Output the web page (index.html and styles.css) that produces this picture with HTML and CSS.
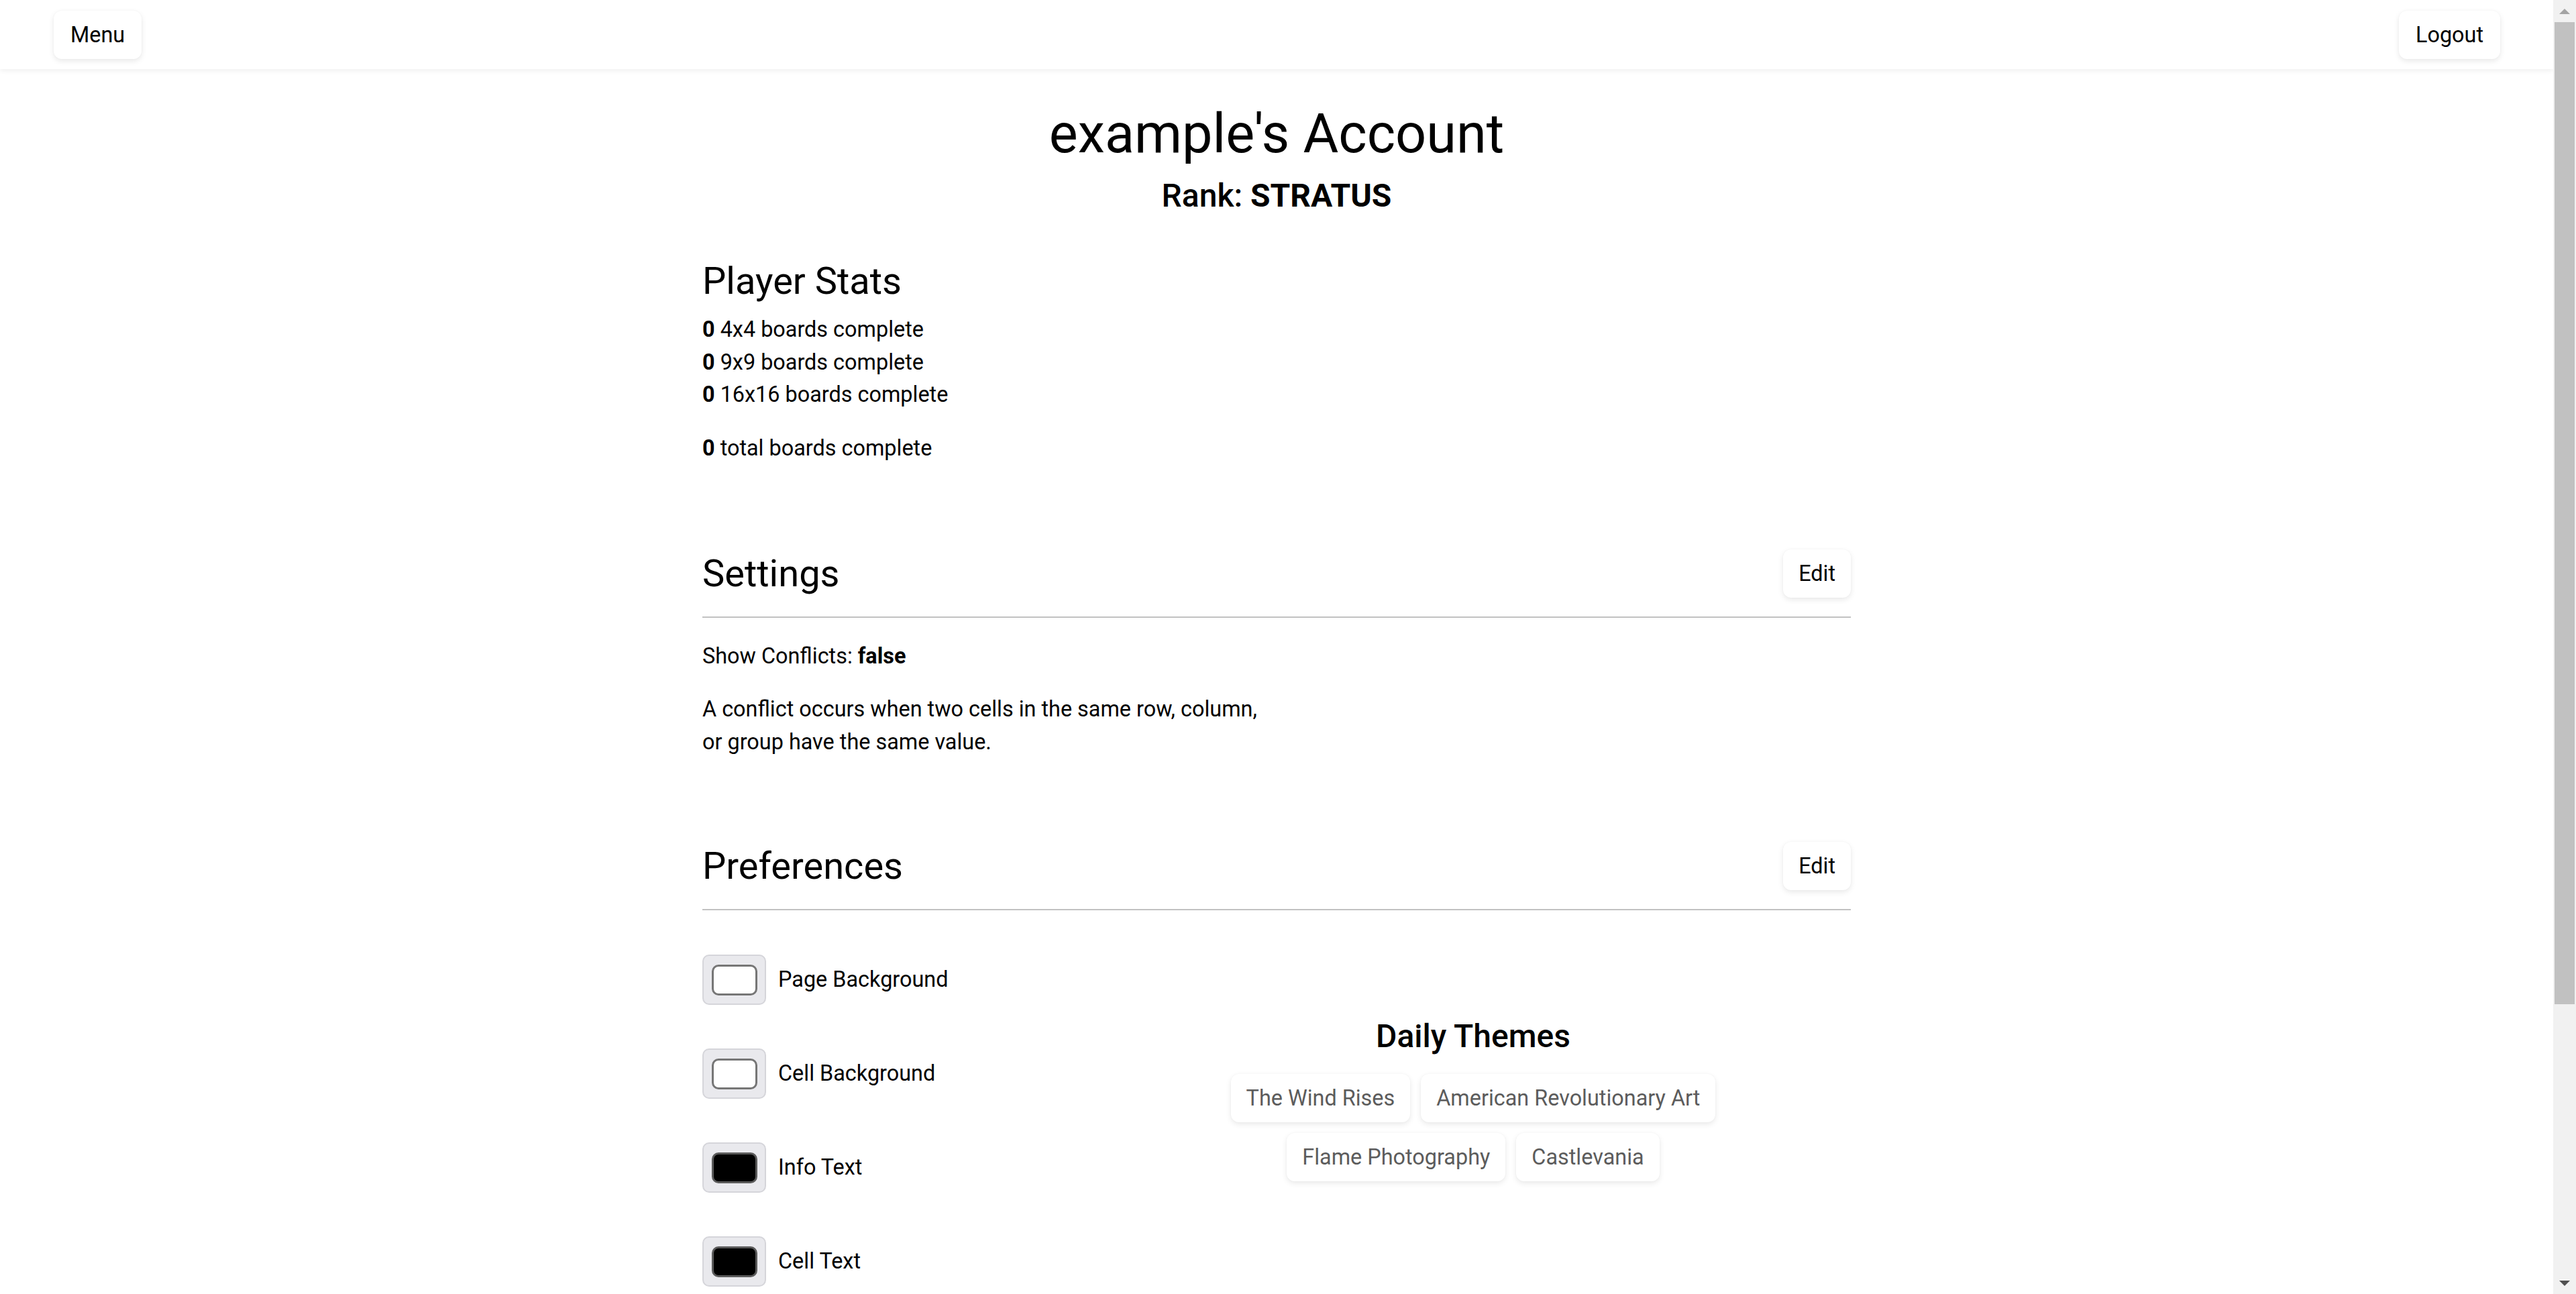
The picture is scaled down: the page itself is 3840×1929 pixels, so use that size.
FILE: index.html
```html
<!DOCTYPE html>
<html lang="en">
<head>
  <meta charset="UTF-8">
  <meta name="viewport" content="width=device-width, initial-scale=1.0">
  <title>example's Account</title>
  <link rel="stylesheet" href="styles.css">
</head>
<body>
  <header class="topbar">
    <button class="btn" type="button">Menu</button>
    <button class="btn" type="button">Logout</button>
  </header>

  <main class="account">
    <h1 class="account-title">example's Account</h1>
    <p class="rank">Rank: <b>STRATUS</b></p>

    <!-- Estadisticas -->
    <section class="stats">
      <h2 class="section-title">Player Stats</h2>
      <div class="stats-list">
        <p><b>0</b> 4x4 boards complete</p>
        <p><b>0</b> 9x9 boards complete</p>
        <p><b>0</b> 16x16 boards complete</p>
      </div>
      <p class="stats-total"><b>0</b> total boards complete</p>
    </section>

    <!-- Ajustes -->
    <section class="panel">
      <div class="panel-head">
        <h2 class="section-title">Settings</h2>
        <button class="btn btn-edit" type="button">Edit</button>
      </div>
      <p class="setting">Show Conflicts: <b>false</b></p>
      <p class="setting-note">A conflict occurs when two cells in the same row, column, or group have the same value.</p>
    </section>

    <!-- Preferencias -->
    <section class="panel">
      <div class="panel-head">
        <h2 class="section-title">Preferences</h2>
        <button class="btn btn-edit" type="button">Edit</button>
      </div>
      <div class="prefs">
        <div class="swatches">
          <div class="swatch-row"><span class="swatch"><span class="swatch-color light"></span></span>Page Background</div>
          <div class="swatch-row"><span class="swatch"><span class="swatch-color light"></span></span>Cell Background</div>
          <div class="swatch-row"><span class="swatch"><span class="swatch-color dark"></span></span>Info Text</div>
          <div class="swatch-row"><span class="swatch"><span class="swatch-color dark"></span></span>Cell Text</div>
        </div>
        <div class="themes">
          <h3 class="themes-title">Daily Themes</h3>
          <div class="chips">
            <span class="chip">The Wind Rises</span>
            <span class="chip">American Revolutionary Art</span>
            <span class="chip">Flame Photography</span>
            <span class="chip">Castlevania</span>
          </div>
        </div>
      </div>
    </section>
  </main>

  <!-- barra de desplazamiento -->
  <div class="scrollbar" aria-hidden="true">
    <span class="scroll-btn"><span class="arrow-up"></span></span>
    <span class="scroll-track"><span class="scroll-thumb"></span></span>
    <span class="scroll-btn"><span class="arrow-down"></span></span>
  </div>
</body>
</html>
```

FILE: styles.css
```css
* {
  box-sizing: border-box;
}
html, body {
  margin: 0;
}
body {
  padding-right: 34px;
  font-family: Roboto, "Noto Sans", Arial, sans-serif;
  font-size: 32.4px;
  line-height: 48.6px;
  color: #000;
  background-color: #fff;
}

.scrollbar {
  position: fixed;
  top: 0;
  right: 0;
  bottom: 0;
  width: 34px;
  display: flex;
  flex-direction: column;
  background: #f1f1f1;
}
.scroll-btn {
  height: 33px;
  display: flex;
  justify-content: center;
  align-items: center;
}
.arrow-up {
  border-left: 8px solid transparent;
  border-right: 8px solid transparent;
  border-bottom: 8px solid #a3a3a3;
}
.arrow-down {
  border-left: 8px solid transparent;
  border-right: 8px solid transparent;
  border-top: 8px solid #505050;
}
.scroll-track {
  flex: 1;
}
.scroll-thumb {
  display: block;
  height: 1464px;
  margin: 0 2px;
  background: #c1c1c1;
}

.topbar {
  height: 103px;
  display: flex;
  justify-content: space-between;
  align-items: center;
  padding: 0 79px 0 80px;
  background: #fff;
  box-shadow: 0 2px 8px rgba(0, 0, 0, 0.07);
}
.btn {
  font-family: inherit;
  font-size: 32.4px;
  line-height: 54px;
  padding: 9px 25px;
  border: none;
  border-radius: 12px;
  background: #fff;
  color: #000;
  box-shadow: 0 3px 9px rgba(0, 0, 0, 0.09), 0 0 3px rgba(0, 0, 0, 0.03);
  cursor: pointer;
}
.btn-edit {
  padding: 9px 23px;
}

.account {
  width: 1712px;
  margin: 0 auto;
  padding: 49px 0 534px;
}
.account p {
  margin: 0;
}
.account-title {
  margin: 0;
  font-size: 81px;
  line-height: 95px;
  font-weight: 400;
  text-align: center;
}
.account .rank {
  margin-top: 17px;
  font-size: 48px;
  line-height: 55px;
  font-weight: 500;
  text-align: center;
}
.rank b {
  font-weight: 700;
}
.section-title {
  margin: 0;
  font-size: 56px;
  line-height: 66px;
  font-weight: 400;
}
.stats {
  margin-top: 67px;
}
.stats-list {
  margin-top: 15px;
}
.account .stats-total {
  margin-top: 31px;
}

.panel {
  margin-top: 127px;
}
.panel + .panel {
  margin-top: 125px;
}
.panel-head {
  display: flex;
  justify-content: space-between;
  align-items: center;
  padding-bottom: 28px;
  border-bottom: 2px solid #c2c2c2;
}
.account .setting {
  margin-top: 33px;
}
.account .setting-note {
  margin-top: 30px;
  max-width: 830px;
}

.prefs {
  display: flex;
}
.swatches {
  width: 586px;
  padding-top: 66px;
  display: flex;
  flex-direction: column;
  gap: 65px;
}
.swatch-row {
  display: flex;
  align-items: center;
  gap: 18px;
}
.swatch {
  width: 95px;
  height: 75px;
  display: flex;
  justify-content: center;
  align-items: center;
  background: #e9e9ed;
  border: 2px solid #d5d5da;
  border-radius: 10px;
}
.swatch-color {
  width: 68px;
  height: 46px;
  border: 3px solid #767676;
  border-radius: 10px;
}
.swatch-color.light {
  background: #fff;
}
.swatch-color.dark {
  background: #000;
  border-color: #5a5a5a;
}

.themes {
  flex: 1;
  padding-top: 160px;
  text-align: center;
}
.themes-title {
  margin: 0;
  font-size: 48px;
  line-height: 56px;
  font-weight: 500;
}
.chips {
  max-width: 760px;
  margin: 28px auto 0;
  display: flex;
  flex-wrap: wrap;
  justify-content: center;
  gap: 16px;
}
.chip {
  padding: 9px 23px;
  line-height: 54px;
  color: #5c5c5c;
  background: #fff;
  border-radius: 12px;
  box-shadow: 0 3px 9px rgba(0, 0, 0, 0.09), 0 0 3px rgba(0, 0, 0, 0.03);
}
```
